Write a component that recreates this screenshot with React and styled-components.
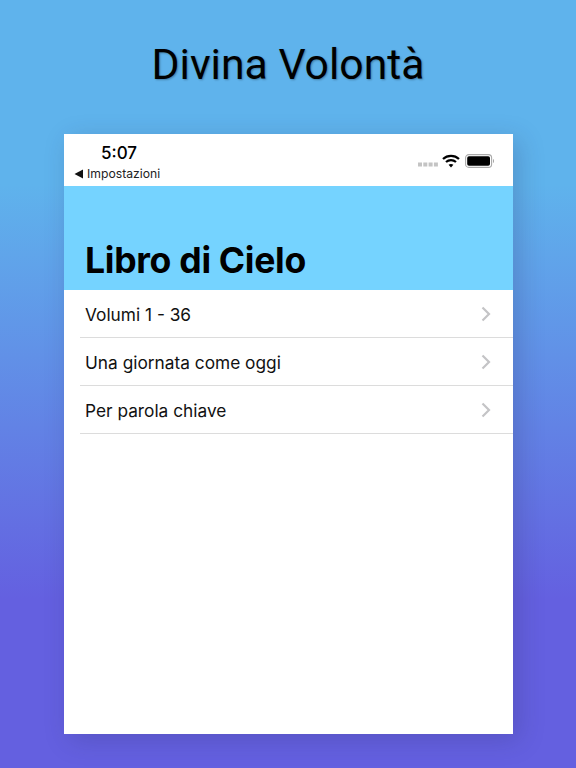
import React from 'react';
import styled, { createGlobalStyle } from 'styled-components';

const GlobalStyle = createGlobalStyle`
  html, body {
    margin: 0;
    padding: 0;
  }
  body {
    width: 576px;
    height: 768px;
    overflow: hidden;
  }
`;

const Page = styled.div`
  box-sizing: border-box;
  width: 576px;
  height: 768px;
  padding-left: 64px;
  background: linear-gradient(180deg, #5fb3ec 0%, #5fb3ec 24%, #6460e0 78%, #6460e0 100%);
`;

const Title = styled.h1`
  margin: 0 0 0 -64px;
  width: 576px;
  height: 134px;
  padding-top: 36px;
  box-sizing: border-box;
  text-align: center;
  font-family: Roboto, sans-serif;
  font-weight: 400;
  font-size: 42.7px;
  line-height: 56px;
  color: #000;
  text-shadow: 1px 1px 2px rgba(0, 0, 0, 0.3);
`;

const Phone = styled.div`
  width: 449px;
  height: 600px;
  background: #fff;
  box-shadow: 6px 6px 24px rgba(40, 40, 90, 0.22);
`;

const StatusBar = styled.div`
  box-sizing: border-box;
  height: 52px;
  padding: 10px 18px 0 10px;
  display: flex;
  justify-content: space-between;
  font-family: Inter, sans-serif;
  color: #000;
`;

const StatusLeft = styled.div`
  display: flex;
  flex-direction: column;
`;

const Clock = styled.div`
  margin-left: 27px;
  font-size: 17px;
  line-height: 19px;
  font-weight: 500;
`;

const BackLink = styled.div`
  margin-top: 4px;
  display: flex;
  align-items: center;
  gap: 3px;
  font-size: 12.2px;
  line-height: 14px;
  font-weight: 400;
  color: #222;
`;

const StatusIcons = styled.div`
  display: flex;
  align-items: center;
  height: 18px;
  padding-top: 8px;
  gap: 5px;
`;

const SignalDots = styled.svg`
  margin-top: 6px;
  margin-right: -1px;
`;

const Header = styled.div`
  box-sizing: border-box;
  height: 104px;
  padding: 54px 0 0 21px;
  background: #75d3ff;
`;

const Heading = styled.div`
  font-family: Inter, sans-serif;
  font-size: 35.6px;
  line-height: 42px;
  font-weight: 700;
  letter-spacing: -0.3px;
  color: #000;
`;

const List = styled.div`
  padding-left: 16px;
`;

const Row = styled.div`
  box-sizing: border-box;
  height: 48px;
  padding: 0 22px 0 5px;
  display: flex;
  align-items: center;
  justify-content: space-between;
  border-bottom: 1px solid #dcdcdc;
`;

const RowLabel = styled.span`
  margin-top: 2px;
  font-family: Inter, sans-serif;
  font-size: 17.3px;
  color: #111;
`;

const Signal = () => (
  <SignalDots width="20" height="5" viewBox="0 0 20 5">
    <g fill="#c4c4c4">
      <rect x="0" y="0.5" width="4" height="4" />
      <rect x="5.3" y="0.5" width="4" height="4" />
      <rect x="10.6" y="0.5" width="4" height="4" />
      <rect x="15.9" y="0.5" width="4" height="4" />
    </g>
  </SignalDots>
);

const Wifi = () => (
  <svg width="18" height="14" viewBox="0 0 18 14" fill="none" stroke="#000" strokeWidth="2.2">
    <path d="M1 5 C5.5 0.8 12.5 0.8 17 5" />
    <path d="M4 8 C6.8 5.5 11.2 5.5 14 8" />
    <path d="M9 13.6 L6.6 10.8 C8 9.7 10 9.7 11.4 10.8 Z" fill="#000" stroke="none" />
  </svg>
);

const Battery = () => (
  <svg width="30" height="14" viewBox="0 0 30 14">
    <rect x="0.6" y="0.6" width="26" height="12.8" rx="3.2" fill="none" stroke="#aaa" strokeWidth="1.1" />
    <rect x="2.2" y="2.2" width="22.8" height="9.6" rx="1.8" fill="#000" />
    <path d="M28 5 C29.2 5.3 29.2 8.7 28 9 Z" fill="#999" />
  </svg>
);

const BackArrow = () => (
  <svg width="10" height="10" viewBox="0 0 10 10">
    <path d="M0.5 5 L9 0.5 V9.5 Z" fill="#111" />
  </svg>
);

const Chevron = () => (
  <svg width="10" height="16" viewBox="0 0 10 16" fill="none" stroke="#c4c4c6" strokeWidth="2.2">
    <path d="M1.5 1.5 L8 8 L1.5 14.5" />
  </svg>
);

const items = ['Volumi 1 - 36', 'Una giornata come oggi', 'Per parola chiave'];

const App = () => (
  <Page>
    <GlobalStyle />
    <Title>Divina Volontà</Title>
    <Phone>
      <StatusBar>
        <StatusLeft>
          <Clock>5:07</Clock>
          <BackLink>
            <BackArrow />
            Impostazioni
          </BackLink>
        </StatusLeft>
        <StatusIcons>
          <Signal />
          <Wifi />
          <Battery />
        </StatusIcons>
      </StatusBar>
      <Header>
        <Heading>Libro di Cielo</Heading>
      </Header>
      <List>
        {items.map((item) => (
          <Row key={item}>
            <RowLabel>{item}</RowLabel>
            <Chevron />
          </Row>
        ))}
      </List>
    </Phone>
  </Page>
);

export default App;
